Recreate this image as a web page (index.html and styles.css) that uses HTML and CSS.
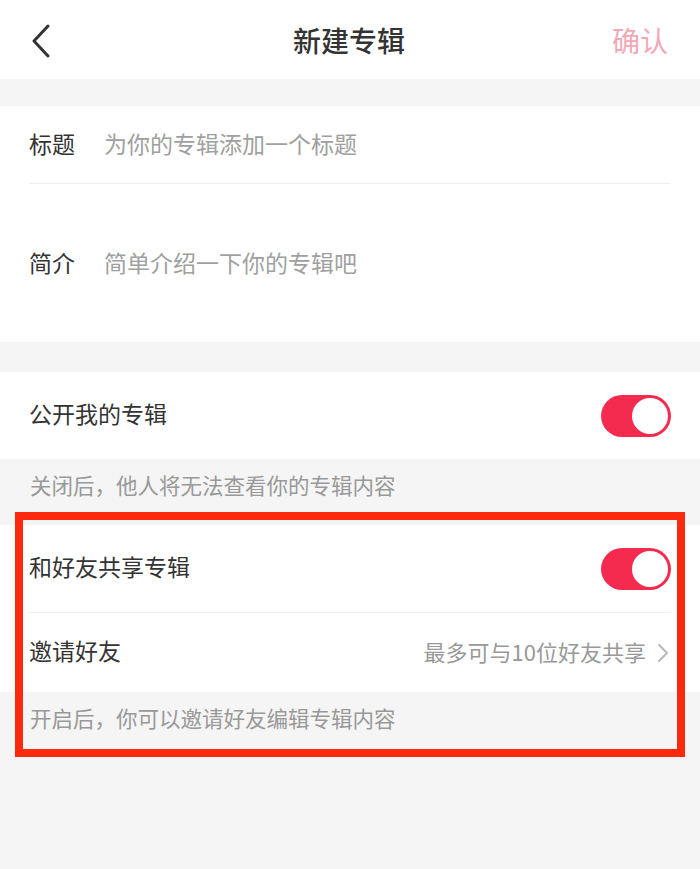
FILE: index.html
```html
<!DOCTYPE html>
<html lang="zh-CN">
<head>
    <meta charset="UTF-8">
    <meta name="viewport" content="width=device-width, initial-scale=1.0">
    <title>新建专辑</title>
    <link rel="stylesheet" href="styles.css">
</head>
<body>
    <div class="header">
        <button class="back-btn" aria-label="返回">
            <svg width="22" height="34" viewBox="0 0 22 34"><path d="M18 2 L4 17 L18 32" fill="none" stroke="#333" stroke-width="3" stroke-linecap="round" stroke-linejoin="round"/></svg>
        </button>
        <h1>新建专辑</h1>
        <button class="confirm-btn">确认</button>
    </div>

    <div class="card">
        <div class="field title-field">
            <span class="label">标题</span>
            <input type="text" placeholder="为你的专辑添加一个标题">
        </div>
        <div class="field intro-field">
            <span class="label">简介</span>
            <textarea placeholder="简单介绍一下你的专辑吧"></textarea>
        </div>
    </div>

    <div class="card setting">
        <div class="row">
            <span class="row-title">公开我的专辑</span>
            <span class="switch on"></span>
        </div>
    </div>
    <div class="note first">关闭后，他人将无法查看你的专辑内容</div>

    <div class="highlight">
        <div class="card">
            <div class="row share-row">
                <span class="row-title">和好友共享专辑</span>
                <span class="switch on"></span>
            </div>
            <div class="row invite-row">
                <span class="row-title">邀请好友</span>
                <span class="row-extra">最多可与10位好友共享
                    <svg width="14" height="22" viewBox="0 0 14 22"><path d="M3 3 L11 11 L3 19" fill="none" stroke="#b8b8b8" stroke-width="2" stroke-linecap="round" stroke-linejoin="round"/></svg>
                </span>
            </div>
        </div>
        <div class="note">开启后，你可以邀请好友编辑专辑内容</div>
    </div>
</body>
</html>
```

FILE: styles.css
```css
body {
    font-family: "Noto Sans CJK SC", "Noto Sans", sans-serif;
    margin: 0;
    padding: 0;
    background-color: #f5f5f5;
    color: #333;
    min-height: 100vh;
}

.header {
    background: #fff;
    height: 79px;
    display: grid;
    grid-template-columns: 1fr auto 1fr;
    align-items: center;
    padding: 0 32px 0 30px;
    margin-bottom: 27px;
}

.header h1 {
    margin: 0;
    font-size: 28px;
    font-weight: 500;
    color: #333;
}

.header button {
    background: none;
    border: none;
    padding: 0;
    font-family: inherit;
    cursor: pointer;
}

.back-btn {
    justify-self: start;
    display: flex;
    margin-top: 2px;
}

.confirm-btn {
    justify-self: end;
    font-size: 28px;
    color: #f4a7b6;
}

.card {
    background: #fff;
    padding: 0 29px;
}

.field {
    display: flex;
    align-items: flex-start;
}

.label {
    font-size: 23px;
    width: 75px;
    flex-shrink: 0;
    line-height: 32px;
}

.field input,
.field textarea {
    flex: 1;
    border: none;
    outline: none;
    padding: 0;
    font-family: inherit;
    font-size: 23px;
    line-height: 32px;
    color: #333;
    background: none;
    resize: none;
}

.field input::placeholder,
.field textarea::placeholder {
    color: #a0a0a0;
}

.title-field {
    height: 78px;
    align-items: center;
    padding-bottom: 4px;
    box-sizing: border-box;
    border-bottom: 1px solid #eee;
}

.intro-field {
    height: 158px;
    padding-top: 62px;
    box-sizing: border-box;
}

.intro-field textarea {
    height: 80px;
}

.setting {
    margin-top: 30px;
}

.row {
    display: flex;
    align-items: center;
    justify-content: space-between;
    height: 87px;
}

.row-title {
    font-size: 23px;
    padding-bottom: 5px;
}

.share-row {
    height: 87px;
    border-bottom: 1px solid #f0f0f0;
}

.invite-row {
    height: 79px;
}

.row-extra {
    display: flex;
    align-items: center;
    gap: 10px;
    font-size: 22px;
    color: #999;
    margin-right: 1px;
    padding-bottom: 3px;
}

.row-extra svg {
    margin-top: 3px;
}

.switch {
    width: 70px;
    height: 42px;
    border-radius: 21px;
    background: #f42b4f;
    position: relative;
}

.switch::after {
    content: "";
    position: absolute;
    top: 3px;
    right: 3px;
    width: 36px;
    height: 36px;
    border-radius: 50%;
    background: #fff;
}

.note {
    font-size: 21.5px;
    color: #999;
    padding: 10px 30px 0;
    height: 52px;
    box-sizing: border-box;
}

.note.first {
    height: 66px;
    padding-top: 10px;
}

/* 红框标注 */
.highlight {
    position: relative;
}

.highlight::after {
    content: "";
    position: absolute;
    top: -13px;
    left: 15px;
    right: 15px;
    bottom: -13px;
    border: 8px solid #fb2a0e;
    pointer-events: none;
}
```
